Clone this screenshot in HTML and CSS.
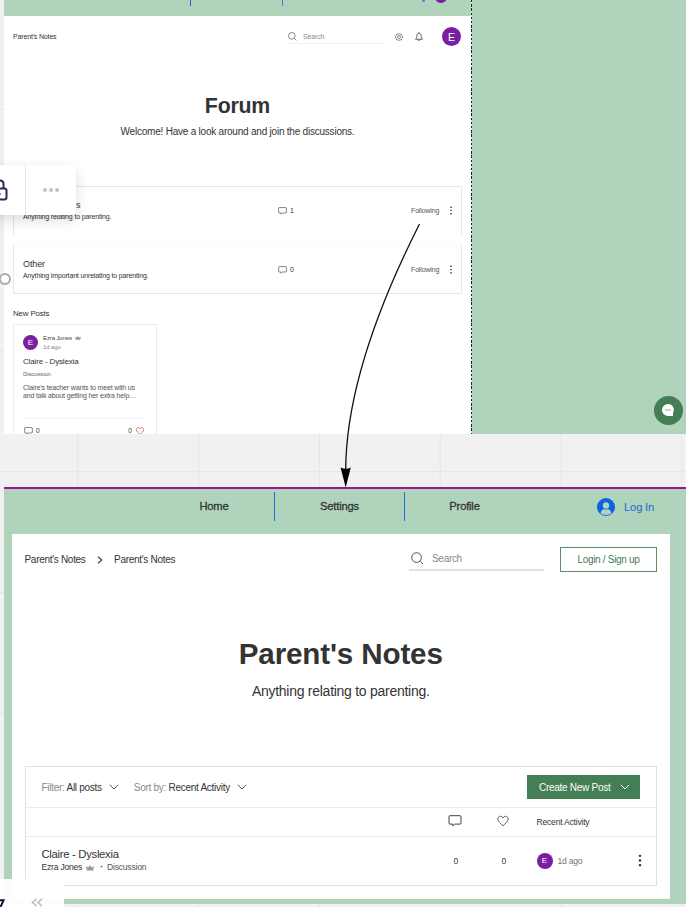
FILE: index.html
```html
<!DOCTYPE html>
<html lang="en">
<head>
<meta charset="utf-8">
<title>Forum flow board</title>
<link rel="stylesheet" href="styles.css">
</head>
<body>
<svg class="defs" width="0" height="0" aria-hidden="true">
  <symbol id="search" viewBox="0 0 14 14"><circle cx="6" cy="6" r="5.2"/><path d="M10 10l3 3"/></symbol>
  <symbol id="comment" viewBox="0 0 14 12"><path d="M2 .7h10q1 0 1 1v6.400q0 1-1 1H6.800L4.800 11V9.100H2q-1 0-1-1V1.700q0-1 1-1z"/></symbol>
  <symbol id="heart" viewBox="0 0 14 13"><path d="M7 12C4 9.300 1 7 1 4.200C1 2.200 2.400 1 4 1C5.400 1 6.500 1.900 7 3C7.500 1.900 8.600 1 10 1C11.600 1 13 2.200 13 4.200C13 7 10 9.300 7 12z"/></symbol>
  <symbol id="down" viewBox="0 0 10 6"><path d="M.8.8L5 5 9.200.8"/></symbol>
  <symbol id="crown" viewBox="0 0 10 7"><path d="M0 1l2.500 2L5 0l2.500 3L10 1 9 6.500H1z"/></symbol>
  <symbol id="dots" viewBox="0 0 4 14"><circle cx="2" cy="2" r="1.300"/><circle cx="2" cy="7" r="1.300"/><circle cx="2" cy="12" r="1.300"/></symbol>
</svg>
<main class="board">
  <section class="frame forum">
    <div class="site">
      <div class="strip"><i class="bar"></i><i class="bar second"></i><i class="tick"></i><i class="half"></i></div>
      <div class="page">
        <header class="top">
          <span class="crumb">Parent's Notes</span>
          <div class="find"><svg class="line"><use href="#search"/></svg><span>Search</span></div>
          <svg class="gear line" viewBox="0 0 16 16"><path d="M8 1l2 1.300 2.500-.3.800 2.300L15 6v4l-1.700 1.700-.8 2.300-2.500-.3L8 15l-2-1.300-2.500.3-.8-2.300L1 10V6l1.700-1.700L3.500 2l2.500.3z"/><circle cx="8" cy="8" r="3"/></svg>
          <svg class="bell line" viewBox="0 0 16 18"><path d="M1 14.500c2-1.500 2.500-3 2.500-6C3.500 5 5 2.500 8 2.500S12.500 5 12.500 8.500c0 3 .5 4.500 2.500 6zM8 .5v2M6 15.500c.5 2 3.500 2 4 0"/></svg>
          <span class="avatar big">E</span>
        </header>
        <h1>Forum</h1>
        <p class="lead">Welcome! Have a look around and join the discussions.</p>
        <div class="cat first">
          <div><h2>Parent's Notes</h2><p>Anything relating to parenting.</p></div>
          <span class="count"><svg class="line"><use href="#comment"/></svg>1</span>
          <span class="follow">Following</span><svg class="dots"><use href="#dots"/></svg>
        </div>
        <div class="cat last">
          <div><h2>Other</h2><p>Anything important unrelating to parenting.</p></div>
          <span class="count"><svg class="line"><use href="#comment"/></svg>0</span>
          <span class="follow">Following</span><svg class="dots"><use href="#dots"/></svg>
        </div>
        <h3>New Posts</h3>
        <article class="card">
          <div class="by"><span class="avatar">E</span><div><p>Ezra Jones <svg class="crown"><use href="#crown"/></svg></p><p class="ago">1d ago</p></div></div>
          <h4>Claire - Dyslexia</h4>
          <p class="tag">Discussion</p>
          <p class="text">Claire's teacher wants to meet with us<br>and talk about getting her extra help…</p>
          <footer><span><svg class="line"><use href="#comment"/></svg>0</span><span>0<svg class="line red"><use href="#heart"/></svg></span></footer>
        </article>
      </div>
    </div>
    <div class="edge"></div>
    <div class="rest"><span class="chat"><svg viewBox="0 0 14 14"><path d="M7 1a6 6 0 1 0 0 12h5V10.200A6 6 0 0 0 7 1z" fill="#fff"/><path d="M4 7h6" stroke="#b5ccbb" stroke-width="1.500"/></svg></span></div>
  </section>

  <section class="frame notes">
    <nav>
      <a>Home</a><a>Settings</a><a>Profile</a>
      <span class="login"><svg viewBox="0 0 18 18"><circle cx="9" cy="9" r="9" fill="#0a62e4"/><circle cx="9" cy="7.500" r="3.200" fill="#b0d3bb"/><path d="M3.500 15.200c.5-3 2.400-4 3.500-4.300 1.300.8 2.700.8 4 0 1.100.3 3 1.300 3.500 4.300-3 2.300-8 2.300-11 0z" fill="#b0d3bb"/></svg>Log In</span>
    </nav>
    <div class="panel">
      <header class="top">
        <span>Parent's Notes</span>
        <svg class="next" viewBox="0 0 6 8"><path d="M1 .8L4.800 4 1 7.200"/></svg>
        <span>Parent's Notes</span>
        <div class="find"><svg class="line"><use href="#search"/></svg><span>Search</span></div>
        <a class="signup">Login / Sign up</a>
      </header>
      <h1>Parent's Notes</h1>
      <p class="lead">Anything relating to parenting.</p>
      <div class="table">
        <div class="filters">
          <span class="f1"><em>Filter:</em> All posts</span><svg class="down"><use href="#down"/></svg>
          <span class="f2"><em>Sort by:</em> Recent Activity</span><svg class="down"><use href="#down"/></svg>
          <a class="create">Create New Post<svg class="down"><use href="#down"/></svg></a>
        </div>
        <div class="row head"><span></span><svg class="line c"><use href="#comment"/></svg><svg class="line h"><use href="#heart"/></svg><span class="recent">Recent Activity</span></div>
        <div class="row post">
          <div><h2>Claire - Dyslexia</h2><p>Ezra Jones <svg class="crown"><use href="#crown"/></svg><b>·</b><span>Discussion</span></p></div>
          <span class="n">0</span><span class="n">0</span>
          <span class="when"><i class="avatar">E</i>1d ago</span>
          <svg class="dots"><use href="#dots"/></svg>
        </div>
      </div>
    </div>
  </section>

  <svg class="arrow" viewBox="0 0 90 270"><path d="M83.500 4C36 98 10 180 9.700 250" fill="none" stroke="#111" stroke-width="1.300"/><path d="M4.600 247.500q5 2.500 10.200 0L9.700 267.500z"/></svg>
  <i class="anchor"></i>
  <div class="tools">
    <div class="lock"><svg viewBox="0 0 16 22"><rect x="1" y="9.500" width="14" height="11" rx="2"/><path d="M4 9.500V5q0-3.500 3.500-3.500h1Q12 1.500 12 5v4.500M8 14v2M7 15h2"/></svg></div>
    <div class="more"><i></i><i></i><i></i></div>
  </div>
  <div class="corner"><svg class="zoomglyph" viewBox="0 0 5 8"><path d="M0 1.200h3.600L.5 8"/></svg><svg class="collapse" viewBox="0 0 12 9"><path d="M5.500.8L1.500 4.500l4 3.700M11 .8L7 4.500l4 3.700"/></svg></div>
</main>
</body>
</html>
```
FILE: styles.css
```css
* { box-sizing: border-box; margin: 0; padding: 0; }
body { font-family: "Liberation Sans", Arial, sans-serif; color: #333; }
h1, h2, h3, h4, em, i { font-style: normal; font-weight: 400; }
svg { display: block; flex: none; }
.defs { position: absolute; }
.line { fill: none; stroke: #444; stroke-width: 1; }
.dots { fill: #333; }
.crown { fill: #999; }
.board {
  position: relative; width: 686px; height: 907px; overflow: hidden;
  background-color: #f1f1f1;
  background-image: linear-gradient(90deg, #e5e5e5 1px, transparent 1px), linear-gradient(#e5e5e5 1px, transparent 1px);
  background-size: 120.8px 120.8px;
  background-position: 77.300px -12px;
}
.frame { position: absolute; left: 4px; width: 682px; background: #b0d3bb; }
.avatar { display: flex; align-items: center; justify-content: center; flex: none; border-radius: 50%; background: #7a1fa2; color: #fff; letter-spacing: 0; }

.forum { top: 0; height: 434px; display: flex; overflow: hidden; }
.site { width: 467px; display: flex; flex-direction: column; }
.strip { height: 15.500px; flex: none; display: flex; align-items: flex-start; padding-left: 186px; overflow: hidden; }
.bar { width: 1px; height: 6px; background: #176ae0; }
.bar.second { margin-left: 91px; opacity: .8; }
.tick { width: 3px; height: 2px; margin-left: 139px; background: #4a8fd0; border-radius: 0 0 2px 2px; }
.half { width: 12px; height: 12px; margin: -9.500px 0 0 10px; border-radius: 50%; background: #7a1fa2; }
.page { flex: 1; background: #fff; padding: 0 9px; }
.edge { width: 1px; background: repeating-linear-gradient(#222 0 2.500px, #dcebe0 2.500px 4.200px); }
.rest { flex: 1; display: flex; align-items: flex-end; justify-content: flex-end; padding: 0 3.500px 9.500px 0; }
.chat { width: 29px; height: 29px; border-radius: 50%; background: #437e54; display: flex; align-items: center; justify-content: center; }
.chat svg { width: 14px; height: 14px; }

.forum .top { height: 42px; display: flex; align-items: center; }
.crumb { width: 274px; font-size: 7px; letter-spacing: -.16px; }
.find { display: flex; align-items: center; color: #8a8a8a; }
.forum .find { width: 95px; height: 14px; border-bottom: 1px solid #f0f0f0; font-size: 7px; letter-spacing: -.16px; }
.forum .find svg { width: 9px; height: 9px; margin: 0 6px 0 1px; }
.gear { width: 8px; height: 8px; margin-left: 12.500px; stroke-width: 1.200; }
.bell { width: 8px; height: 9px; margin-left: 12.500px; stroke-width: 1.600; }
.big { width: 19px; height: 19px; margin-left: 19px; font-size: 10.500px; }
.forum h1 { margin-top: 36px; height: 24px; line-height: 24px; font-weight: 700; font-size: 21.300px; letter-spacing: -.2px; text-align: center; }
.forum .lead { margin-top: 7px; height: 14px; line-height: 14px; font-size: 10px; letter-spacing: -.22px; text-align: center; }
.cat { height: 49px; display: flex; align-items: center; padding: 2px 7px 0 9px; border: 1px solid #e6e6e6; font-size: 7px; letter-spacing: -.15px; }
.cat.first { margin-top: 47.500px; border-bottom-color: transparent; }
.cat.last { margin-top: 10px; border-top-color: #fafafa; }
.cat div { width: 255px; }
.cat h2 { font-size: 9px; line-height: 11px; letter-spacing: -.1px; }
.cat p { line-height: 12px; }
.count { display: flex; align-items: center; gap: 3px; width: 133px; }
.count svg { width: 9px; height: 8px; }
.cat .count { margin-top: -2px; }
.cat .follow { margin-top: -2px; width: 38px; color: #555; }
.cat .dots { width: 4px; height: 9px; margin-top: -2px; }
.forum h3 { margin-top: 15px; font-size: 7.900px; letter-spacing: -.15px; line-height: 10px; }
.card { width: 144px; margin-top: 4.500px; border: 1px solid #ebebeb; padding: 10px 9px 0; height: 130px; }
.by { display: flex; align-items: center; gap: 5px; height: 16px; font-size: 6px; letter-spacing: -.12px; line-height: 9px; color: #444; }
.by .avatar { width: 15px; height: 15px; font-size: 8px; }
.by p { display: flex; align-items: center; gap: 3px; }
.by .ago { color: #888; }
.by .crown { width: 6px; height: 4px; }
.card h4 { margin-top: 6px; font-size: 8px; letter-spacing: -.16px; line-height: 10px; }
.tag { margin-top: 3px; font-size: 6px; letter-spacing: -.12px; line-height: 8px; color: #666; }
.text { margin-top: 6px; font-size: 7px; letter-spacing: -.15px; line-height: 8.700px; color: #555; white-space: nowrap; }
.card footer { margin-top: 17px; border-top: 1px solid #f4f4f4; display: flex; justify-content: space-between; padding: 7px 2px 0 1px; font-size: 6.600px; }
.card footer span { display: flex; align-items: center; gap: 3px; height: 10px; }
.card footer svg { width: 9px; height: 8px; }
.card footer .red { stroke: #e2504c; stroke-width: 1.300; width: 10px; }

.notes { top: 487px; height: 417px; border-top: 2px solid #9c168d; }
nav { height: 45px; display: flex; align-items: flex-start; padding: 3px 32px 0 150px; font-size: 11.200px; letter-spacing: -.2px; -webkit-text-stroke: .3px; }
nav a { width: 120px; height: 29px; line-height: 29px; text-align: center; }
nav a:nth-child(2) { width: 131px; border: 1px solid #1c70e0; border-width: 0 1px; }
nav a:nth-child(3) { width: 119px; }
.login { margin-left: auto; display: flex; align-items: center; gap: 9px; height: 30px; color: #2069d8; -webkit-text-stroke: 0; }
.login svg { width: 18px; height: 18px; }
.panel { width: 658.500px; height: 365px; margin-left: 7.500px; background: #fff; padding: 0 13px; }
.notes .top { height: 51px; display: flex; align-items: center; font-size: 10px; letter-spacing: -.3px; }
.next { width: 6px; height: 8px; margin: 0 11.500px 0 11px; fill: none; stroke: #444; stroke-width: 1.200; }
.notes .find { width: 135px; height: 23px; margin: 0 16px 0 auto; border-bottom: 2px solid #e0e0e0; }
.notes .find svg { width: 13px; height: 13px; margin: 0 8.500px 0 1.500px; }
.signup { width: 97px; height: 25px; line-height: 23px; text-align: center; color: #437e54; border: 1px solid #5a9069; }
.notes h1 { margin-top: 50.500px; height: 36px; line-height: 36px; font-size: 29.600px; letter-spacing: -.15px; font-weight: 700; text-align: center; }
.notes .lead { margin-top: 9px; height: 20px; line-height: 20px; font-size: 14px; letter-spacing: -.27px; text-align: center; }
.table { margin-top: 65.500px; height: 119.500px; border: 1px solid #e2e2e2; font-size: 8.600px; letter-spacing: -.23px; }
.filters { height: 41px; display: flex; align-items: center; padding: 0 16px; border-bottom: 1px solid #ebebeb; font-size: 10px; letter-spacing: -.28px; }
.filters em { color: #8a8a8a; }
.down { width: 10px; height: 6px; fill: none; stroke: #555; stroke-width: 1; margin-left: 7px; }
.f2 { margin-left: 15px; }
.create { margin-left: auto; width: 113px; height: 24px; display: flex; align-items: center; padding-left: 12px; background: #437e54; color: #fff; }
.create .down { stroke: #fff; margin-left: 10px; }
.row { display: grid; grid-template-columns: 407px 48px 48px 96px 1fr; align-items: center; padding-left: 16px; }
.head { height: 28.500px; border-bottom: 1px solid #ebebeb; }
.row .c { width: 14px; height: 12px; margin: -2px 0 0 -1px; }
.row .h { width: 12px; height: 12px; margin-top: -2px; }
.recent { margin-left: -8px; }
.post { height: 48px; }
.post h2 { font-size: 11.300px; letter-spacing: -.3px; line-height: 14px; }
.post p { display: flex; align-items: center; line-height: 13px; white-space: pre; }
.post .crown { width: 8px; height: 6px; margin-left: 2px; }
.post b { margin: 0 4px 0 6px; }
.post p span { color: #555; }
.n { padding-left: 5px; }
.when { display: flex; align-items: center; gap: 5px; margin-left: -8px; color: #777; }
.when .avatar { width: 16px; height: 16px; font-size: 8px; }
.post .dots { width: 4px; height: 13px; margin-left: -3px; }

.arrow { position: absolute; left: 336px; top: 220px; width: 90px; height: 270px; }
.anchor { position: absolute; left: -1px; top: 273px; width: 12px; height: 12px; border: 2px solid #aaa; border-radius: 50%; background: #fff; }
.tools { position: absolute; left: -10px; top: 165px; width: 86px; height: 50px; display: flex; background: #fff; border-radius: 4px; box-shadow: 0 5px 14px rgba(0,0,0,.14); }
.lock { width: 36px; border-right: 1px solid #e6e6e9; display: flex; align-items: center; }
.lock svg { width: 17px; height: 22px; margin-left: 1px; fill: none; stroke: #2d295a; stroke-width: 2; }
.more { flex: 1; display: flex; align-items: center; justify-content: center; gap: 2px; }
.more i { width: 4px; height: 4px; border-radius: 50%; background: #c3c1d0; }
.corner { position: absolute; left: 0; top: 879px; width: 64px; height: 28px; background: rgba(255,255,255,.95); display: flex; align-items: flex-end; }
.zoomglyph { width: 5px; height: 8px; fill: none; stroke: #10102e; stroke-width: 2; }
.collapse { width: 12px; height: 9px; margin-left: 26px; fill: none; stroke: #c3c1d0; stroke-width: 1.800; }
```
